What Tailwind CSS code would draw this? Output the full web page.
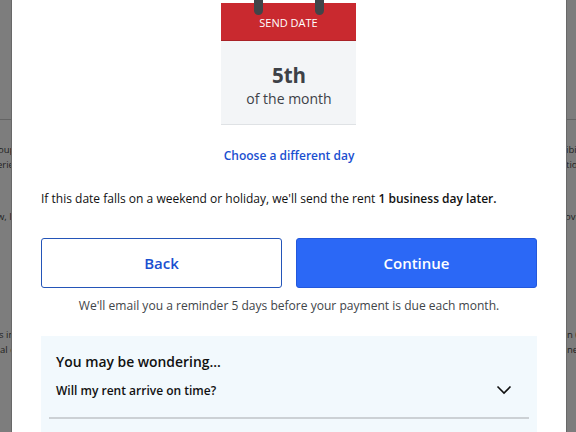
<!DOCTYPE html>
<html lang="en">
<head>
    <meta charset="UTF-8">
    <title>Send date</title>
    <script src="https://cdn.jsdelivr.net/npm/@tailwindcss/browser@4"></script>
</head>
<body class="w-[576px] h-[432px] overflow-hidden bg-[#7d7d7d] font-['Open_Sans','Noto_Sans',sans-serif] flex whitespace-nowrap">

<!-- page behind the dialog, left edge -->
<div class="w-3 h-full shrink-0 overflow-hidden text-[9.5px] leading-[15px] text-[#222222] border-r border-[#686868]">
    <div class="h-[120px] border-b border-[#646464]"></div>
    <p class="mt-[22px] -ml-[2px]">oup</p>
    <p class="-ml-[3px]">erie</p>
    <p class="mt-[37px] -ml-[3px]">w, I</p>
    <p class="mt-[103px] -ml-px">s in</p>
    <p>al c</p>
</div>

<main class="w-[554px] h-full shrink-0 bg-white pl-[29px] pr-[29px] flex flex-col items-center text-[#111111]">
    <!-- calendar -->
    <div class="relative mt-[3px] mr-px w-[135px] h-[122px] shrink-0 bg-[#f3f5f7] border-b border-[#dfe2e5] text-center text-[#3d4147]">
        <span class="absolute -top-2 left-[33px] w-[9px] h-[20px] rounded-full bg-[#414549]"></span>
        <span class="absolute -top-2 left-[94px] w-[9px] h-[20px] rounded-full bg-[#414549]"></span>
        <div class="h-[38px] bg-[#c9292f] border-b border-[#a92227] text-white text-[11px] leading-[40px]">SEND DATE</div>
        <div class="mt-[22px] pl-px text-[20.5px] leading-[25px] font-bold">5th</div>
        <div class="mt-px pl-px text-[14px] leading-5">of the month</div>
    </div>

    <a href="#" class="mt-[21px] text-[12px] leading-5 font-semibold text-[#1a4fd0]">Choose a different day</a>

    <p class="mt-[23px] w-full text-[12.03px] leading-5">If this date falls on a weekend or holiday, we'll send the rent <span class="font-semibold">1 business day later.</span></p>

    <div class="mt-[29px] w-full flex gap-[14px] text-[15px] font-semibold">
        <button class="w-[241px] h-[50px] rounded-[3px] border border-[#2455b8] text-[#1a4fd0]">Back</button>
        <button class="w-[241px] h-[50px] rounded-[3px] border border-[#2358dc] bg-[#2b68f6] text-white">Continue</button>
    </div>

    <p class="mt-2 text-[12.05px] leading-5 text-[#414549]">We'll email you a reminder 5 days before your payment is due each month.</p>

    <section class="mt-5 w-full h-[96px] shrink-0 bg-[#f2f9fd] px-2">
        <h2 class="pt-4 pb-px pl-[7px] text-[13.9px] leading-5 font-semibold">You may be wondering...</h2>
        <div class="pl-[7px] pr-[17px] h-[46px] flex justify-between border-b-2 border-[#ccd1d5]">
            <span class="mt-2 text-[12px] leading-5 font-semibold">Will my rent arrive on time?</span>
            <svg class="mt-3 w-4 h-[10px]" viewBox="0 0 16 10" fill="none" stroke="#111111" stroke-width="1.6">
                <path d="M1.5 1.5L8 8L14.5 1.5"/>
            </svg>
        </div>
    </section>
</main>

<!-- page behind the dialog, right edge -->
<div class="w-[10px] h-full shrink-0 overflow-hidden text-[9.5px] leading-[15px] text-[#222222] border-l border-[#686868]">
    <div class="h-[120px] border-b border-[#646464]"></div>
    <p class="mt-[22px] -ml-px">ibi</p>
    <p class="-ml-px">tio</p>
    <p class="mt-[37px] -ml-0.5">ovi</p>
    <p class="mt-[103px]">n (</p>
    <p>ne</p>
</div>

</body>
</html>
